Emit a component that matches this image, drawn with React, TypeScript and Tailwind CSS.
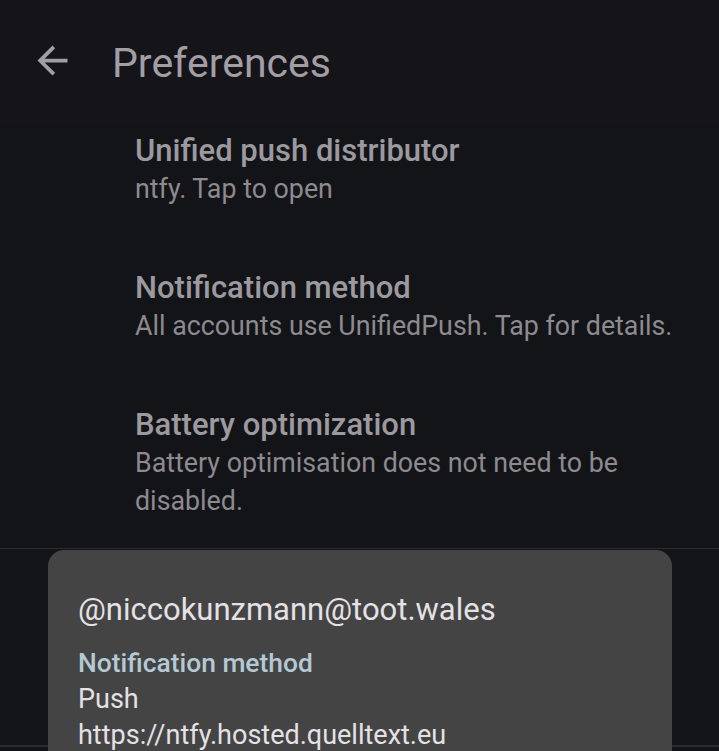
import React from "react";

const items = [
  { title: "Unified push distributor", summary: ["ntfy. Tap to open"] },
  { title: "Notification method", summary: ["All accounts use UnifiedPush. Tap for details."] },
  { title: "Battery optimization", summary: ["Battery optimisation does not need to be disabled."] },
];

export default function App() {
  return (
    <div
      className="w-[719px] h-[751px] overflow-hidden bg-[#131417] flex flex-col"
      style={{ fontFamily: "Roboto, 'Noto Sans', sans-serif" }}
    >
      <header className="h-[122px] shrink-0 bg-[#151419] flex items-start pl-[30px] pt-[38px]">
        <svg viewBox="0 0 24 24" className="w-[45px] h-[45px] shrink-0" fill="#a29ea6">
          <path d="M20 11H7.83l5.59-5.59L12 4l-8 8 8 8 1.41-1.41L7.83 13H20v-2z" />
        </svg>
        <h1 className="ml-[37px] mt-[1px] text-[41px] leading-[48px] text-[#a29ea6] font-normal">
          Preferences
        </h1>
      </header>
      <main className="relative flex-1 overflow-hidden">
        <div className="-mt-[21px] flex flex-col">
          {items.map((it, i) => (
            <div
              key={it.title}
              className={`pl-[135px] pr-[30px] pt-[31px] ${i === 2 ? "pb-[28px]" : "pb-[30px]"}`}
            >
              <div className="text-[31px] leading-[38px] font-medium text-[#9c999f]">{it.title}</div>
              <div className="text-[26.8px] leading-[38px] text-[#8d8a90]">{it.summary[0]}</div>
            </div>
          ))}
          <div className="h-px bg-[#2b2c30]" />
          <div className="h-[196px]" />
          <div className="h-[2px] bg-[#2b2c30]" />
        </div>
        <div className="absolute left-[48px] top-[428px] w-[624px] h-[260px] rounded-[16px] bg-[#444444] pl-[30px] pt-[40px]">
          <div className="text-[31px] leading-[40px] text-[#e5e1e6]">@niccokunzmann@toot.wales</div>
          <div className="mt-[15px] text-[26.4px] leading-[36px] font-medium text-[#b4c9d4]">
            Notification method
          </div>
          <div className="text-[27px] leading-[36px] text-[#e5e1e6]">Push</div>
          <div className="text-[27px] leading-[36px] text-[#e5e1e6]">https://ntfy.hosted.quelltext.eu</div>
        </div>
      </main>
    </div>
  );
}
